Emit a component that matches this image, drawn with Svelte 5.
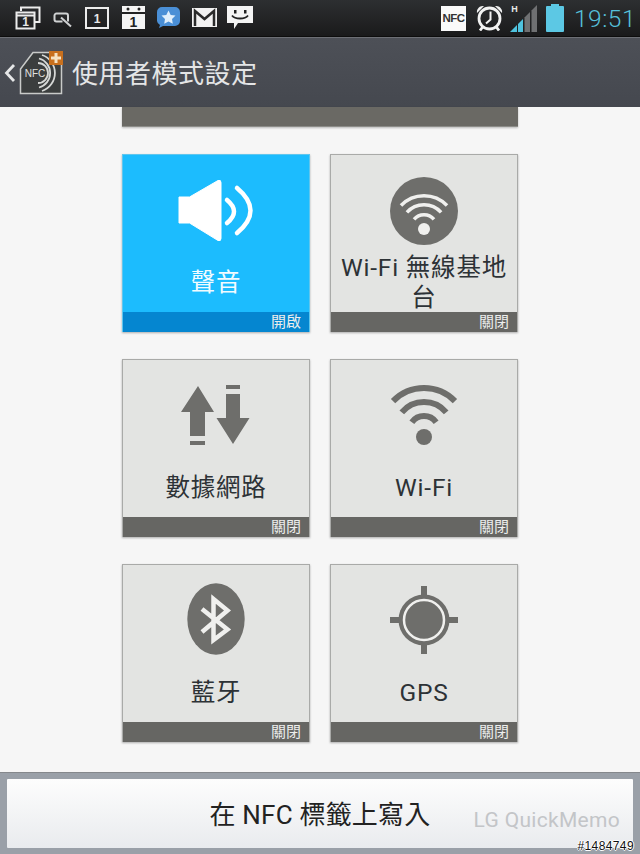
<script>
  const tiles = [
    { id: "sound", label: "聲音", state: "開啟", on: true },
    { id: "ap", label: "Wi-Fi 無線基地台", state: "關閉" },
    { id: "data", label: "數據網路", state: "關閉" },
    { id: "wifi", label: "Wi-Fi", state: "關閉" },
    { id: "bt", label: "藍牙", state: "關閉" },
    { id: "gps", label: "GPS", state: "關閉" }
  ];

  // wifi band: arc around (cx, cy), deg either side of straight up
  function arc(cx, cy, r, deg) {
    const a = (deg * Math.PI) / 180;
    const dx = r * Math.sin(a);
    const dy = r * Math.cos(a);
    return `M${cx - dx} ${cy - dy}A${r} ${r} 0 0 1 ${cx + dx} ${cy - dy}`;
  }
</script>

<div class="page">
  <header class="status">
    <div class="notes">
      <svg width="26" height="24" viewBox="0 0 26 24">
        <path d="M6 5V1.5h18.5V16H20" class="ln" />
        <rect x="1.5" y="6.5" width="18" height="16" class="ln" />
        <path d="M1.5 9.500h18" class="ln" />
        <text x="10.500" y="20" class="num">1</text>
      </svg>
      <svg class="gap-q" width="20" height="16" viewBox="0 0 20 16">
        <path d="M15 9.500V3.500a2 2 0 0 0-2-2H3.500a2 2 0 0 0-2 2v4a2 2 0 0 0 2 2h6" class="ln soft" />
        <path d="M8 5.500l10 9" class="ln soft" />
      </svg>
      <svg class="gap-c" width="24" height="22" viewBox="0 0 24 22">
        <rect x="1" y="1" width="22" height="20" class="ln" />
        <text x="12" y="16" class="num">1</text>
      </svg>
      <svg class="gap-w" width="23" height="23" viewBox="0 0 23 23">
        <path d="M0 0h23v23H0z" fill="#f4f4f4" />
        <path d="M0 6h23v2H0z" fill="#222" />
        <circle cx="6" cy="3" r="1.500" fill="#222" />
        <circle cx="17" cy="3" r="1.500" fill="#222" />
        <text x="11.500" y="21" class="num dark">1</text>
      </svg>
      <svg class="gap-s" width="23" height="21" viewBox="0 0 23 21">
        <path d="M5 0h13a5 5 0 0 1 5 5v9a5 5 0 0 1-5 5H6l-4 2 1-3a5 5 0 0 1-3-4V5a5 5 0 0 1 5-5z" fill="#4a8fd6" />
        <path d="M11.500 3.500l2.200 4.400 4.800.7-3.500 3.400.8 4.800-4.300-2.300-4.300 2.300.8-4.800-3.500-3.400 4.800-.7z" fill="#dfeefb" />
      </svg>
      <svg class="gap-m" width="25" height="19" viewBox="0 0 25 19">
        <path d="M0 0h25v19H0z" fill="#f2f2f2" />
        <path d="M3 18V3l9.500 8L22 3v15" fill="none" stroke="#2a2a2a" stroke-width="2.500" />
      </svg>
      <svg class="gap-b" width="26" height="23" viewBox="0 0 26 23">
        <path d="M0 0h26v17H11l-4 6v-6H0z" fill="#f4f4f4" />
        <rect x="7" y="4" width="2.500" height="3.500" fill="#222" />
        <rect x="17" y="4" width="2.500" height="3.500" fill="#222" />
        <path d="M5 9.500c3 4 13 4 16 0" fill="none" stroke="#222" stroke-width="1.800" />
      </svg>
    </div>
    <div class="sys">
      <span class="nfc-badge">NFC</span>
      <svg class="alarm" width="27" height="26" viewBox="0 0 27 26">
        <circle cx="13.500" cy="13.500" r="10.500" fill="none" stroke="#f2f2f2" stroke-width="2.800" />
        <path d="M14.500 6.500v8l-4.500 4" fill="none" stroke="#f2f2f2" stroke-width="2" />
        <path d="M1 8a6 6 0 0 1 7-7zM26 8a6 6 0 0 0-7-7z" fill="#f2f2f2" />
        <path d="M4 25.500l3-4M23 25.500l-3-4" stroke="#f2f2f2" stroke-width="2.800" />
      </svg>
      <svg class="signal" width="28" height="28" viewBox="0 0 28 28">
        <path d="M0 28l7-7v7z" fill="#4fc3df" />
        <path d="M8 20l5-5v13H8z" fill="#4fc3df" />
        <path d="M14.500 13.500L20 8v20h-5.500z" fill="#6f7072" />
        <path d="M21.500 6.500L27 1v27h-5.500z" fill="#6f7072" />
        <text x="4.500" y="8" class="h">H</text>
      </svg>
      <svg class="batt" width="18" height="28" viewBox="0 0 18 28">
        <path d="M5 0h8v2h4a1 1 0 0 1 1 1v24a1 1 0 0 1-1 1H1a1 1 0 0 1-1-1V3a1 1 0 0 1 1-1h4z" fill="#5cc8e4" />
      </svg>
      <span class="clock">19:51</span>
    </div>
  </header>

  <div class="actionbar">
    <svg width="72" height="46" viewBox="0 0 72 46">
      <path d="M14 15L6.500 23 14 31" fill="none" stroke="#e6e7e8" stroke-width="2.800" />
      <path d="M33 2.500H61.500V43.500H20.500V19z" fill="#3b3e3e" stroke="#c9cbc9" stroke-width="1.500" />
      <text x="35" y="26.500" class="nfc-mini">NFC</text>
      <path d="M38 13a10 10 0 0 1 0 20M39 8.500a15 15 0 0 1 0 29M42 5a19 19 0 0 1 0 36" fill="none" stroke="#d6d8d6" stroke-width="1.800" />
      <path d="M49 1h14v14H49z" fill="#c8701e" />
      <path d="M56 3v10M51 8h10" stroke="#f6e3c4" stroke-width="3" />
    </svg>
    <h1>使用者模式設定</h1>
  </div>

  <main class="content">
    <div class="sliver"></div>
    <div class="grid">
      {#each tiles as t}
        <div class="tile" class:on={t.on}>
          <div class="body">
            <svg class="icon" width="92" height="92" viewBox="0 0 92 92">
              {#if t.id === "sound"}
                <path d="M9 33h10.500L48 16.500q3-1 3 2v56q0 3-3 2L19.500 59H9z" fill="#fff" stroke="#fff" stroke-width="1" stroke-linejoin="round" />
                <path d="M57 36q14 11.500 0 23M67 24q27 22.500 0 45" fill="none" stroke="#fff" stroke-width="4.500" stroke-linecap="round" />
              {:else if t.id === "ap"}
                <circle cx="46" cy="47" r="34" class="g" />
                <path d={arc(46, 63.700, 32, 46)} class="wband w" />
                <path d={arc(46, 63.700, 23, 48)} class="wband w" />
                <path d={arc(46, 63.700, 13, 50)} class="wband w" />
                <circle cx="46" cy="65" r="6" fill="#f0f0ee" />
              {:else if t.id === "data"}
                <path d="M28 17L44 43H35V67H20V43H11zM20 72h15v4H20zM56 16h14v4H56zM56 25h14v24h9.500L63 75 46.500 49H56z" class="g" />
              {:else if t.id === "wifi"}
                <path d={arc(46, 62, 43, 46)} class="wband" />
                <path d={arc(46, 62, 29, 50)} class="wband" />
                <path d={arc(46, 62, 15, 54)} class="wband" />
                <circle cx="46" cy="68" r="8" class="g" />
              {:else if t.id === "bt"}
                <ellipse cx="46" cy="45" rx="28.700" ry="35.700" class="g" />
                <path d="M32 35L57.500 55.500 43.500 66V25L57.500 36.500 32 58" fill="none" stroke="#f0f0ee" stroke-width="4.500" />
              {:else}
                <path d="M43 12h6v68h-6zM12 43h68v6H12z" class="g" />
                <circle cx="46" cy="46" r="25.500" class="g" />
                <circle cx="46" cy="46" r="20" fill="none" stroke="#f0f0ee" stroke-width="2.500" />
              {/if}
            </svg>
            <div class="label">{t.label}</div>
          </div>
          <div class="state">{t.state}</div>
        </div>
      {/each}
    </div>
  </main>

  <footer class="foot">
    <button class="write">在 NFC 標籤上寫入</button>
    <span class="memo">LG QuickMemo</span>
    <span class="mark">#1484749</span>
  </footer>
</div>

<style>
  :global(body) {
    margin: 0;
  }

  .page {
    position: relative;
    width: 640px;
    height: 854px;
    display: flex;
    flex-direction: column;
    overflow: hidden;
    background: #f6f6f6;
    font-family: Roboto, "Noto Sans CJK TC", sans-serif;
  }

  /* --- status bar --- */
  .status {
    height: 36px;
    flex: none;
    display: flex;
    justify-content: space-between;
    align-items: center;
    padding: 0 10px 0 15px;
    background: linear-gradient(#2d2f31, #1a1a1b);
    border-bottom: 1px solid #0d0d0d;
    box-sizing: content-box;
  }

  .notes,
  .sys {
    display: flex;
    align-items: center;
  }

  .notes {
    margin-top: -1px;
  }

  .gap-q { margin-left: 12px; margin-top: 5px; }
  .gap-c { margin-left: 12px; }
  .gap-w { margin-left: 13px; }
  .gap-s { margin-left: 12px; }
  .gap-m { margin-left: 12px; }
  .gap-b { margin-left: 10px; }

  .ln {
    fill: none;
    stroke: #ececec;
    stroke-width: 2;
  }

  .soft {
    stroke: #cfd1d2;
  }

  .num {
    font-family: "Liberation Sans", sans-serif;
    font-size: 12px;
    font-weight: 700;
    text-anchor: middle;
    fill: #e8e8e8;
  }

  .num.dark {
    fill: #222;
    font-size: 14px;
  }

  .h {
    font-family: "Liberation Sans", sans-serif;
    font-size: 9px;
    font-weight: 700;
    text-anchor: middle;
    fill: #e8e8e8;
  }

  .nfc-badge {
    width: 25px;
    height: 25px;
    background: #fafafa;
    color: #333;
    font-family: "Liberation Sans", sans-serif;
    font-size: 11.500px;
    font-weight: 700;
    letter-spacing: -0.6px;
    display: flex;
    align-items: center;
    justify-content: center;
  }

  .alarm { margin-left: 10px; }
  .signal { margin-left: 7px; }
  .batt { margin-left: 8px; }

  .clock {
    margin-left: 10px;
    width: 56px;
    color: #56c0da;
    font-size: 24.500px;
    font-weight: 300;
    letter-spacing: 0.5px;
    white-space: nowrap;
  }

  /* --- action bar --- */
  .actionbar {
    height: 70px;
    flex: none;
    box-sizing: border-box;
    display: flex;
    align-items: center;
    border-top: 1px solid #6d6f75;
    background: linear-gradient(#4d5057, #45484f);
    color: #e4e5e6;
  }

  .actionbar svg {
    flex: none;
    display: block;
  }

  .actionbar h1 {
    margin: 0 0 3px;
    font-size: 26px;
    font-weight: 400;
    letter-spacing: 0.500px;
    font-family: "Noto Sans CJK TC", sans-serif;
    white-space: nowrap;
  }

  /* --- tiles --- */
  .content {
    flex: 1;
    display: flex;
    flex-direction: column;
    align-items: center;
  }

  .sliver {
    width: 396px;
    height: 20px;
    flex: none;
    box-sizing: border-box;
    background: #6a6964;
    border-bottom: 1px solid #8c8c88;
    box-shadow: 0 1px 2px rgba(0, 0, 0, 0.25);
  }

  .grid {
    margin-top: 27px;
    display: grid;
    grid-template-columns: 188px 188px;
    grid-auto-rows: 178px;
    column-gap: 20px;
    row-gap: 27px;
  }

  .tile {
    display: flex;
    flex-direction: column;
    box-sizing: border-box;
    background: #e3e4e2;
    border: 1px solid #a9aaa8;
    border-bottom: none;
    box-shadow: 0 1px 2px rgba(0, 0, 0, 0.3);
  }

  .tile.on {
    background: #1cbcfe;
    border-color: #5fc6ee;
  }

  .body {
    flex: 1;
    min-height: 0;
    display: flex;
    flex-direction: column;
    align-items: center;
  }

  .icon {
    flex: none;
    margin-top: 9px;
    display: block;
  }

  .label {
    flex: 1;
    min-height: 0;
    display: flex;
    align-items: center;
    justify-content: center;
    text-align: center;
    width: 176px;
    margin-bottom: 3px;
    font-size: 24.500px;
    line-height: 30px;
    letter-spacing: 0.800px;
    color: #2d3236;
  }

  .on .label {
    color: #f2fbff;
  }

  .state {
    height: 20px;
    flex: none;
    background: #666663;
    color: #ecedec;
    font-size: 15px;
    line-height: 20px;
    text-align: right;
    padding-right: 8px;
  }

  .on .state {
    background: #0586d0;
  }

  .g {
    fill: #6e6e6b;
  }

  .wband {
    fill: none;
    stroke: #6e6e6b;
    stroke-width: 6;
  }

  .wband.w {
    stroke: #f0f0ee;
    stroke-width: 3.500;
  }

  .nfc-mini {
    font-family: "Liberation Sans", sans-serif;
    font-size: 10px;
    font-weight: 400;
    text-anchor: middle;
    fill: #e0e2e0;
  }

  /* --- bottom bar --- */
  .foot {
    height: 82px;
    flex: none;
    box-sizing: border-box;
    padding: 6px 7px;
    background: #9aa0a8;
    border-top: 1px solid #85888c;
  }

  .write {
    display: block;
    width: 100%;
    height: 69px;
    padding: 0 0 2px;
    border: none;
    border-radius: 1px;
    background: linear-gradient(#fdfdfd, #e9ebee);
    color: #222;
    font-family: Roboto, "Noto Sans CJK TC", sans-serif;
    font-size: 26px;
    letter-spacing: 0.200px;
  }

  .memo {
    position: absolute;
    right: 20px;
    bottom: 22px;
    font-size: 21px;
    color: #c3c5c8;
    letter-spacing: 0.300px;
  }

  .mark {
    position: absolute;
    right: 6px;
    bottom: 1px;
    font-family: "Liberation Sans", sans-serif;
    font-size: 12px;
    color: #111;
    letter-spacing: 0.400px;
    text-shadow: 1px 0 0 #fff, -1px 0 0 #fff, 0 1px 0 #fff, 0 -1px 0 #fff;
  }
</style>
